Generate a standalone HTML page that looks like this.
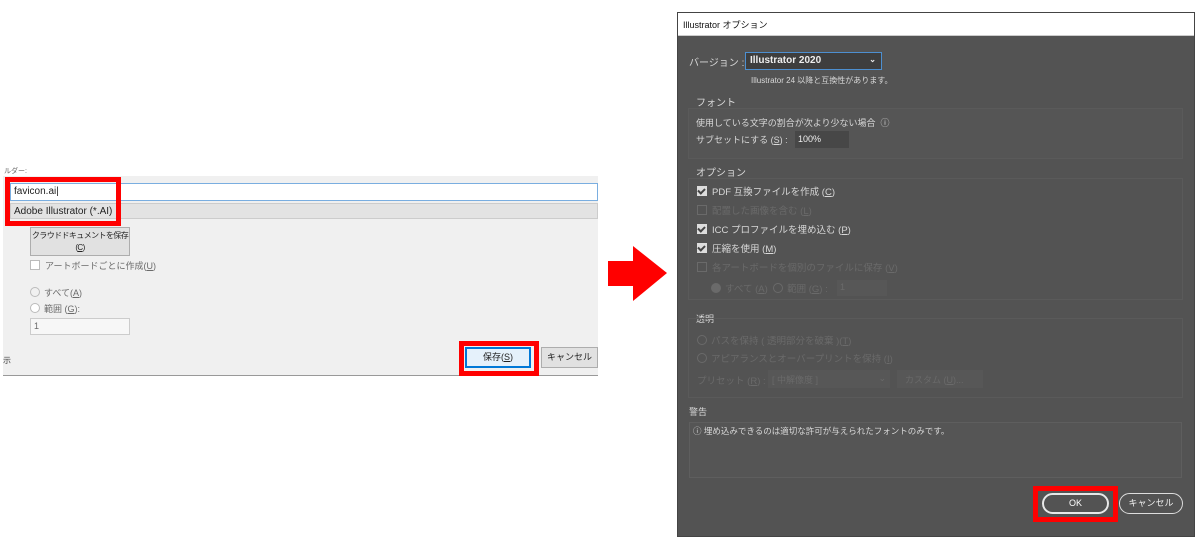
<!DOCTYPE html>
<html><head><meta charset="utf-8"><style>
*{margin:0;padding:0;box-sizing:border-box}
body{width:1200px;height:550px;background:#fff;position:relative;overflow:hidden;font-family:"Liberation Sans","Noto Sans CJK JP",sans-serif;font-size:10px;color:#222}
.a{position:absolute;white-space:nowrap}
.d{color:#d8d8d8}
.f{color:#6a6a6a}
.cb{display:inline-block;width:10px;height:10px;background:#ddd;vertical-align:-1px;margin-right:5px;position:relative}
.cb:after{content:"";position:absolute;left:2px;top:1px;width:3px;height:5px;border:solid #444;border-width:0 2px 2px 0;transform:rotate(45deg)}
.cbo{display:inline-block;width:10px;height:10px;border:1px solid #6a6a6a;vertical-align:-1px;margin-right:5px}
.ro{display:inline-block;width:10px;height:10px;border:1px solid #6a6a6a;border-radius:50%;vertical-align:-1px;margin-right:4px}
</style></head><body>
<!-- left panel -->
<div class="a" style="left:3px;top:176px;width:595px;height:200px;background:#f0f0f0;border-bottom:1px solid #999"></div>
<div class="a" style="left:4px;top:166px;font-size:7px;color:#666">ルダー:</div>
<div class="a" style="left:10px;top:183px;width:588px;height:18px;background:#fff;border:1px solid #7aaee0;padding:2px 3px;font-size:10px">favicon.ai|</div>
<div class="a" style="left:10px;top:203px;width:588px;height:16px;background:#e3e3e3;border:1px solid #ccc;padding:2px 3px;font-size:10px">Adobe Illustrator (*.AI)</div>
<div class="a" style="left:5px;top:177px;width:116px;height:49px;border:5px solid #f00"></div>
<div class="a" style="left:30px;top:227px;width:100px;height:29px;background:#e1e1e1;border:1px solid #adadad;text-align:center;font-size:8px;letter-spacing:-0.6px;line-height:12px;padding-top:2px">クラウドドキュメントを保存<br>(<u>C</u>)</div>
<div class="a f" style="left:30px;top:259px;font-size:9px"><span class="cbo" style="background:#fff;border-color:#bbb"></span>アートボードごとに作成(<u>U</u>)</div>
<div class="a f" style="left:30px;top:286px;font-size:9px"><span class="ro" style="border-color:#bbb"></span>すべて(<u>A</u>)</div>
<div class="a f" style="left:30px;top:302px;font-size:9px"><span class="ro" style="border-color:#bbb;background:#fff"></span>範囲 (<u>G</u>):</div>
<div class="a f" style="left:30px;top:318px;width:100px;height:17px;border:1px solid #ccc;background:#f7f7f7;padding:2px 3px;font-size:9px">1</div>
<div class="a" style="left:3px;top:355px;font-size:8px;color:#444">示</div>
<div class="a" style="left:459px;top:341px;width:80px;height:35px;border:5px solid #f00"></div>
<div class="a" style="left:465px;top:347px;width:66px;height:21px;background:#e5f1fb;border:2px solid #0078d7;text-align:center;font-size:9px;line-height:17px">保存(<u>S</u>)</div>
<div class="a" style="left:541px;top:347px;width:57px;height:21px;background:#e1e1e1;border:1px solid #adadad;text-align:center;font-size:9px;line-height:19px">キャンセル</div>
<!-- arrow -->
<svg class="a" style="left:600px;top:240px" width="75" height="70"><polygon points="8,21 33,21 33,6 67,33 33,61 33,46 8,46" fill="#f00"/></svg>
<!-- right dialog -->
<div class="a" style="left:677px;top:12px;width:518px;height:525px;background:#535353;border:1px solid #444"></div>
<div class="a" style="left:678px;top:13px;width:516px;height:23px;background:#fff;border-bottom:1px solid #ccc;padding:5px 5px;font-size:9px;color:#111">Illustrator オプション</div>
<div class="a d" style="left:689px;top:54px;font-size:10px">バージョン :</div>
<div class="a" style="left:745px;top:52px;width:137px;height:18px;background:#3e3e3e;border:1px solid #4d8fd0;color:#eee;font-size:10px;font-weight:bold;padding:2px 4px">Illustrator 2020<span style="position:absolute;right:5px;top:2px;font-size:8px">⌄</span></div>
<div class="a d" style="left:751px;top:75px;font-size:8px">Illustrator 24 以降と互換性があります。</div>
<div class="a d" style="left:696px;top:94px;font-size:10px">フォント</div>
<div class="a" style="left:688px;top:108px;width:495px;height:51px;border:1px solid #5a5a5a;background:#555"></div>
<div class="a d" style="left:696px;top:116px;font-size:9px">使用している文字の割合が次より少ない場合 &nbsp;ⓘ</div>
<div class="a d" style="left:696px;top:133px;font-size:9px">サブセットにする (<u>S</u>) :</div>
<div class="a" style="left:795px;top:131px;width:54px;height:17px;background:#474747;color:#eee;font-size:9px;padding:3px 3px">100%</div>
<div class="a d" style="left:696px;top:164px;font-size:10px">オプション</div>
<div class="a" style="left:688px;top:178px;width:495px;height:122px;border:1px solid #5a5a5a"></div>
<div class="a d" style="left:697px;top:184px;font-size:9.5px"><span class="cb"></span>PDF 互換ファイルを作成 (<u>C</u>)</div>
<div class="a f" style="left:697px;top:203px;font-size:9.5px"><span class="cbo"></span>配置した画像を含む (<u>L</u>)</div>
<div class="a d" style="left:697px;top:222px;font-size:9.5px"><span class="cb"></span>ICC プロファイルを埋め込む (<u>P</u>)</div>
<div class="a d" style="left:697px;top:241px;font-size:9.5px"><span class="cb"></span>圧縮を使用 (<u>M</u>)</div>
<div class="a f" style="left:697px;top:260px;font-size:9.5px"><span class="cbo"></span>各アートボードを個別のファイルに保存 (<u>V</u>)</div>
<div class="a f" style="left:711px;top:281px;font-size:9.5px"><span class="ro" style="background:#6a6a6a"></span>すべて (<u>A</u>) &nbsp;<span class="ro"></span>範囲 (<u>G</u>) :</div>
<div class="a f" style="left:837px;top:280px;width:50px;height:16px;background:#575757;padding:2px 3px;font-size:9px">1</div>
<div class="a d" style="left:696px;top:312px;font-size:9px">透明</div>
<div class="a" style="left:688px;top:318px;width:495px;height:80px;border:1px solid #5a5a5a"></div>
<div class="a f" style="left:697px;top:333px;font-size:9.5px"><span class="ro"></span>パスを保持 ( 透明部分を破棄 )(<u>T</u>)</div>
<div class="a f" style="left:697px;top:351px;font-size:9.5px"><span class="ro"></span>アピアランスとオーバープリントを保持 (<u>I</u>)</div>
<div class="a f" style="left:697px;top:373px;font-size:9.5px">プリセット (<u>R</u>) :</div>
<div class="a f" style="left:768px;top:370px;width:122px;height:18px;background:#575757;padding:3px 4px;font-size:9px">[ 中解像度 ]<span style="position:absolute;right:4px">⌄</span></div>
<div class="a f" style="left:897px;top:370px;width:86px;height:18px;background:#575757;padding:3px 8px;font-size:9px">カスタム (<u>U</u>)...</div>
<div class="a d" style="left:689px;top:405px;font-size:9px">警告</div>
<div class="a" style="left:689px;top:422px;width:493px;height:56px;border:1px solid #5e5e5e;background:#555"></div>
<div class="a d" style="left:693px;top:425px;font-size:8.5px">ⓘ 埋め込みできるのは適切な許可が与えられたフォントのみです。</div>
<div class="a" style="left:1033px;top:486px;width:85px;height:36px;border:5px solid #f00"></div>
<div class="a" style="left:1042px;top:493px;width:67px;height:21px;border:2px solid #e8e8e8;border-radius:11px;color:#fff;text-align:center;font-size:9px;line-height:17px">OK</div>
<div class="a" style="left:1119px;top:493px;width:64px;height:21px;border:1px solid #ddd;border-radius:11px;color:#eee;text-align:center;font-size:9px;line-height:19px">キャンセル</div>
</body></html>
